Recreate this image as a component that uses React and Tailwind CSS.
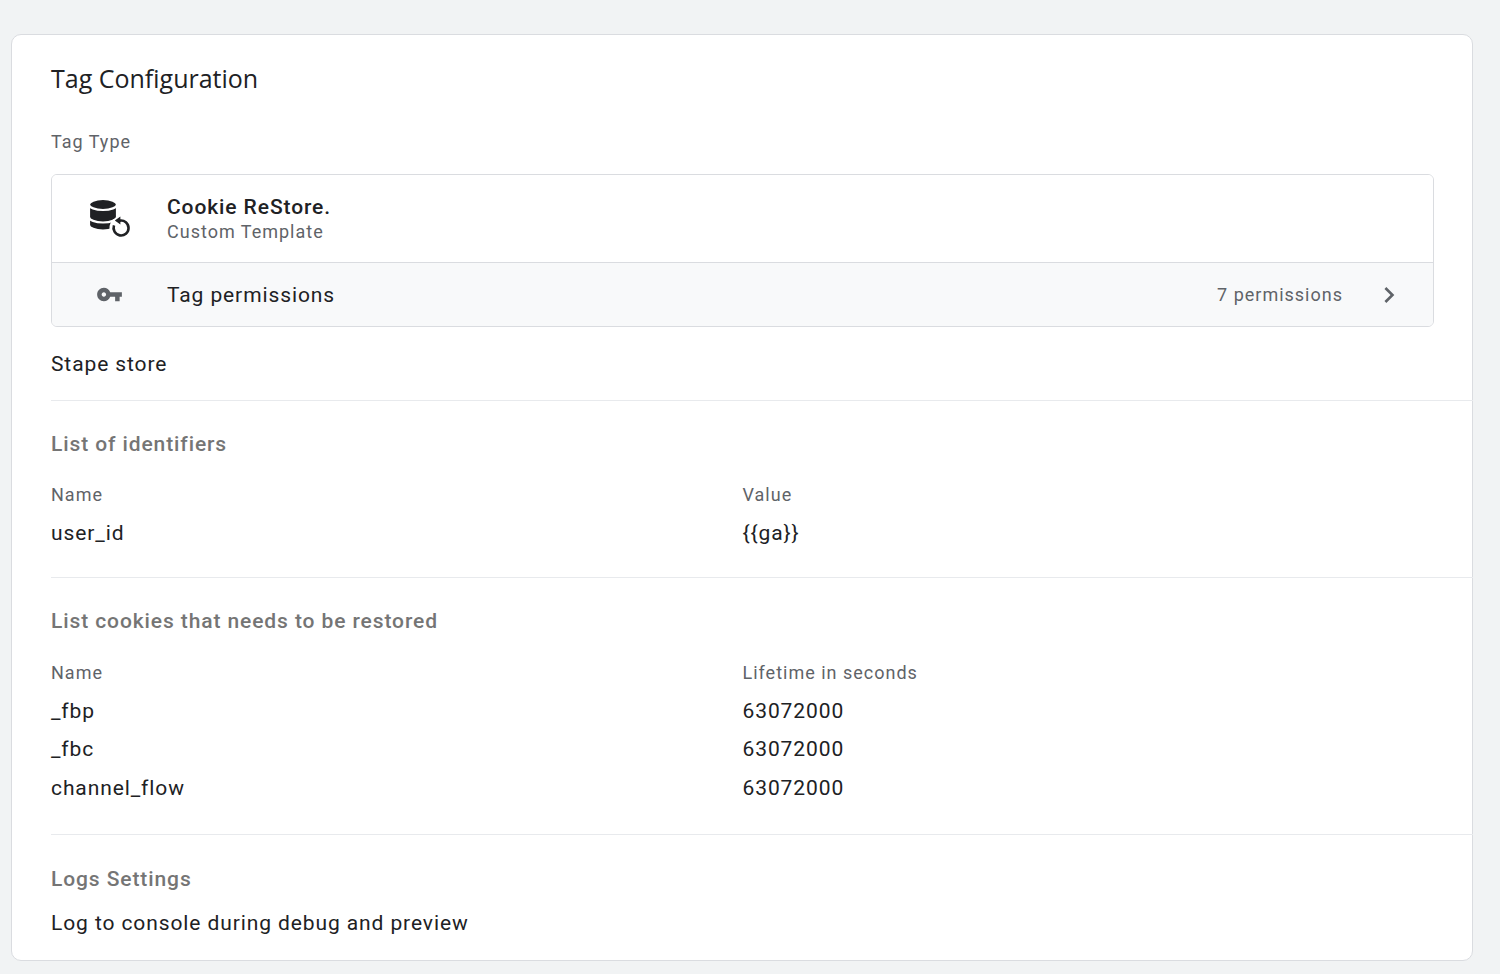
import React from 'react';

const cookies = [
  { name: '_fbp', lifetime: '63072000' },
  { name: '_fbc', lifetime: '63072000' },
  { name: 'channel_flow', lifetime: '63072000' },
];

// database stack with a restore arrow, drawn in page coordinates
function DatabaseRestoreIcon() {
  return (
    <svg width="46" height="42" viewBox="86 198 46 42">
      <path d="M88 213v12a14 5.5 0 0 0 28 0v-12z" fill="#202124" stroke="#fff" strokeWidth="2.2" />
      <path d="M88 205v12a14 5.5 0 0 0 28 0v-12z" fill="#202124" stroke="#fff" strokeWidth="2.2" />
      <ellipse cx="102" cy="204.5" rx="14" ry="5.5" fill="#202124" stroke="#fff" strokeWidth="2.2" />
      <circle cx="120" cy="228" r="11.5" fill="#fff" />
      <path d="M118.7 220.6A7.5 7.5 0 1 1 113 225.4" fill="none" stroke="#202124" strokeWidth="2.6" />
      <path d="M113.8 220.6l5.6-4v8z" fill="#202124" />
    </svg>
  );
}

function KeyIcon() {
  return (
    <svg width="27" height="27" viewBox="0 0 24 24" fill="#5f6368">
      <path d="M12.65 10C11.83 7.67 9.61 6 7 6c-3.31 0-6 2.69-6 6s2.69 6 6 6c2.61 0 4.83-1.67 5.65-4H17v4h4v-4h2v-4H12.65zM7 14c-1.1 0-2-.9-2-2s.9-2 2-2 2 .9 2 2-.9 2-2 2z" />
    </svg>
  );
}

function ChevronRight() {
  return (
    <svg width="32" height="32" viewBox="0 0 24 24" fill="#5f6368">
      <path d="M10 6L8.59 7.41 13.17 12l-4.58 4.59L10 18l6-6z" />
    </svg>
  );
}

function Divider() {
  return <div className="h-px bg-[#e8eaed] mr-[-39px]" />;
}

export default function App() {
  return (
    <div
      className="min-h-[974px] bg-[#f1f3f4] pt-[34px] pl-[11px] pr-[27px] pb-[14px]"
      style={{ fontFamily: 'Roboto, "Liberation Sans", sans-serif' }}
    >
      <div className="bg-white border border-[#dadce0] rounded-[10px] pl-[39px] pr-[38px] pt-[27px] pb-[23px]">
        <h1
          className="text-[25px] leading-[32px] text-[#202124]"
          style={{ fontFamily: '"Open Sans", Roboto, sans-serif' }}
        >
          Tag Configuration
        </h1>

        <div className="mt-[36px] text-[18px] leading-[24px] text-[#5f6368] tracking-[1px]">Tag Type</div>

        <div className="mt-[20px] border border-[#dadce0] rounded-[6px] overflow-hidden">
          <div className="flex items-center h-[87px] bg-white">
            <div className="w-[115px] pl-[35px] flex items-center">
              <DatabaseRestoreIcon />
            </div>
            <div>
              <div className="text-[21px] leading-[26px] font-medium text-[#202124] tracking-[0.9px]">Cookie ReStore.</div>
              <div className="text-[18px] leading-[24px] text-[#5f6368] tracking-[1px]">Custom Template</div>
            </div>
          </div>
          <div className="flex items-center h-[64px] bg-[#f8f9fa] border-t border-[#dadce0]">
            <div className="w-[115px] pl-[44px] flex items-center">
              <KeyIcon />
            </div>
            <div className="flex-1 text-[21px] leading-[28px] text-[#202124] tracking-[0.9px]">Tag permissions</div>
            <div className="text-[18px] leading-[24px] text-[#5f6368] tracking-[1px]">7 permissions</div>
            <div className="ml-[30px] mr-[28px] flex items-center">
              <ChevronRight />
            </div>
          </div>
        </div>

        <div className="mt-[23px] pb-[22px] text-[21px] leading-[28px] text-[#202124] tracking-[0.9px]">Stape store</div>
        <Divider />

        <div className="pt-[29px] pb-[30px]">
          <div className="text-[21px] leading-[28px] font-medium text-[#757575] tracking-[0.9px]">List of identifiers</div>
          <div className="mt-[25px] grid grid-cols-2">
            <div className="text-[18px] leading-[24px] text-[#5f6368] tracking-[1px]">Name</div>
            <div className="text-[18px] leading-[24px] text-[#5f6368] tracking-[1px]">Value</div>
            <div className="mt-[12px] text-[21px] leading-[28px] text-[#202124] tracking-[0.9px]">user_id</div>
            <div className="mt-[12px] text-[21px] leading-[28px] text-[#202124] tracking-[0.9px]">{'{{ga}}'}</div>
          </div>
        </div>
        <Divider />

        <div className="pt-[29px] pb-[26px]">
          <div className="text-[21px] leading-[28px] font-medium text-[#757575] tracking-[0.9px]">
            List cookies that needs to be restored
          </div>
          <div className="mt-[26px] grid grid-cols-2">
            <div className="text-[18px] leading-[24px] text-[#5f6368] tracking-[1px]">Name</div>
            <div className="text-[18px] leading-[24px] text-[#5f6368] tracking-[1px]">Lifetime in seconds</div>
          </div>
          <div className="mt-[7px]">
            {cookies.map((c) => (
              <div key={c.name} className="grid grid-cols-2 h-[38.5px] items-center text-[21px] text-[#202124] tracking-[0.9px]">
                <div>{c.name}</div>
                <div>{c.lifetime}</div>
              </div>
            ))}
          </div>
        </div>
        <Divider />

        <div className="pt-[30px]">
          <div className="text-[21px] leading-[28px] font-medium text-[#757575] tracking-[0.9px]">Logs Settings</div>
          <div className="mt-[16px] text-[21px] leading-[28px] text-[#202124] tracking-[0.9px]">
            Log to console during debug and preview
          </div>
        </div>
      </div>
    </div>
  );
}
